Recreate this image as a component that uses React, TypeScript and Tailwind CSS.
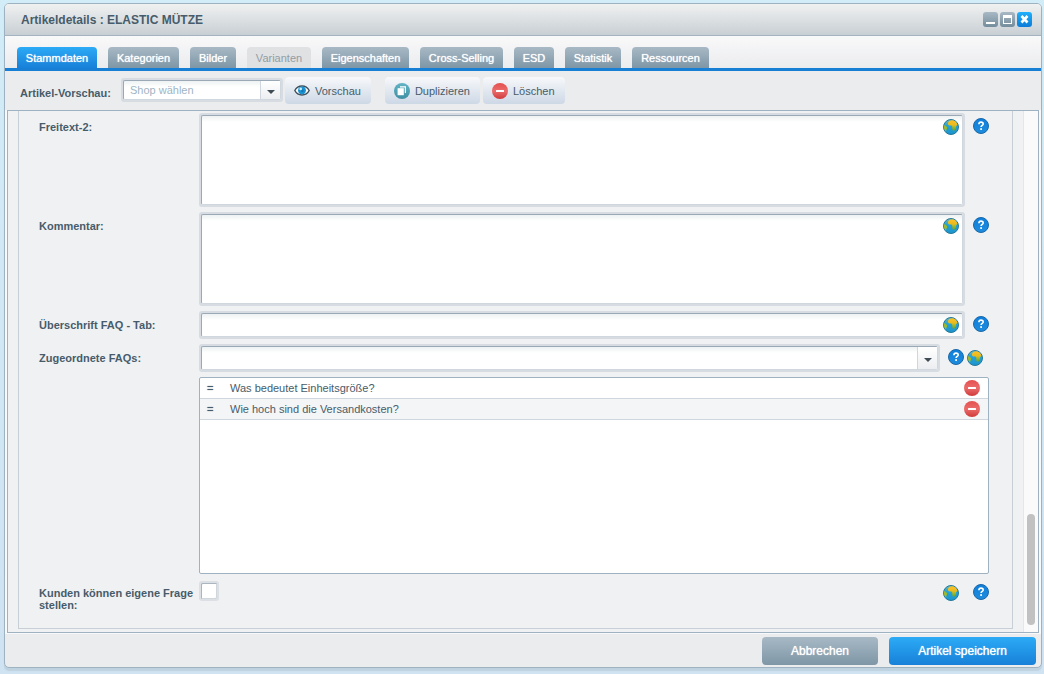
import React, { useState } from "react";

interface Tab {
  id: string;
  label: string;
  width: string;
  disabled?: boolean;
}

const TABS: Tab[] = [
  { id: "main", label: "Stammdaten", width: "w-[80px]" },
  { id: "categories", label: "Kategorien", width: "w-[71px]" },
  { id: "images", label: "Bilder", width: "w-[46px]" },
  { id: "variants", label: "Varianten", width: "w-[64px]", disabled: true },
  { id: "properties", label: "Eigenschaften", width: "w-[87px]" },
  { id: "cross", label: "Cross-Selling", width: "w-[83px]" },
  { id: "esd", label: "ESD", width: "w-[40px]" },
  { id: "stats", label: "Statistik", width: "w-[56px]" },
  { id: "resources", label: "Ressourcen", width: "w-[77px]" },
];

const FAQS = ["Was bedeutet Einheitsgröße?", "Wie hoch sind die Versandkosten?"];

const GlobeIcon = () => (
  <svg width="16" height="16" viewBox="0 0 16 16" className="block">
    <defs>
      <linearGradient id="sea" x1="0" y1="0" x2="0" y2="1">
        <stop offset="0" stopColor="#6dbbb8" />
        <stop offset="0.4" stopColor="#25a3d8" />
        <stop offset="1" stopColor="#1c94cc" />
      </linearGradient>
      <linearGradient id="land" x1="0" y1="0" x2="0" y2="1">
        <stop offset="0.2" stopColor="#f6be22" />
        <stop offset="0.45" stopColor="#e5bb20" />
        <stop offset="0.7" stopColor="#9cb526" />
        <stop offset="1" stopColor="#5fa32c" />
      </linearGradient>
    </defs>
    <circle cx="8" cy="8" r="7.500" fill="url(#sea)" stroke="#23789a" />
    <path
      d="M5.200 3.200 6.500 1.700 9.800 1.300 12.300 2.200 14 4.400 14.200 6 13 7.600 12.800 9.600 11.600 11.600 9.800 11.800 9.400 10.200 9.200 7.600 8.400 6.600 6 6.500 4.900 5.200z"
      fill="url(#land)"
    />
    <path d="M.8 6.400 2 6.200 3.400 7.600 4.300 8.600 3.600 10.400 2.900 12.400 1.500 10.800.8 8.600z" fill="#9db92c" />
  </svg>
);

const HelpIcon = () => (
  <svg width="16" height="16" viewBox="0 0 16 16" className="block">
    <defs>
      <linearGradient id="help" x1="0" y1="0" x2="0" y2="1">
        <stop offset="0" stopColor="#0f7fdc" />
        <stop offset="1" stopColor="#1f8cdc" />
      </linearGradient>
    </defs>
    <circle cx="8" cy="8" r="7.500" fill="url(#help)" stroke="#1a68a8" />
    <path
      d="M5.900 6.200C5.900 4.800 6.800 4.100 8 4.100c1.300 0 2.200.7 2.200 1.800 0 1.500-2.100 1.500-2.100 3.200"
      fill="none"
      stroke="#fff"
      strokeWidth="1.600"
    />
    <rect x="7.200" y="10.200" width="1.800" height="1.700" fill="#fff" />
  </svg>
);

const MinusIcon = () => (
  <svg width="16" height="16" viewBox="0 0 16 16" className="block">
    <defs>
      <linearGradient id="red" x1="0" y1="0" x2="0" y2="1">
        <stop offset="0" stopColor="#e4504f" />
        <stop offset="0.5" stopColor="#ea6c6b" />
        <stop offset="1" stopColor="#d03a3a" />
      </linearGradient>
    </defs>
    <circle cx="8" cy="8" r="8" fill="url(#red)" />
    <rect x="4" y="7" width="8" height="2" rx="0.500" fill="#fff" />
  </svg>
);

const CopyIcon = () => (
  <svg width="16" height="16" viewBox="0 0 16 16" className="block">
    <defs>
      <linearGradient id="teal" x1="0" y1="0" x2="0" y2="1">
        <stop offset="0" stopColor="#62b4c4" />
        <stop offset="1" stopColor="#3e8fa4" />
      </linearGradient>
    </defs>
    <circle cx="8" cy="8" r="8" fill="url(#teal)" />
    <path d="M6 3.200h6v6.800h-1.200V4.400H6z" fill="#fff" />
    <rect x="3.600" y="5.200" width="6.200" height="7" fill="#fff" />
  </svg>
);

const EyeIcon = () => (
  <svg width="16" height="16" viewBox="0 0 16 16" className="block">
    <path
      d="M.8 7.500C2.500 4.300 5 3 8 3s5.500 1.300 7.200 4.500C13.500 10.800 11 12 8 12S2.500 10.800.8 7.500z"
      fill="#fff"
      stroke="#3c4f5a"
      strokeWidth="1.400"
    />
    <circle cx="8" cy="7.300" r="3.900" fill="#1a92d2" />
    <circle cx="8.400" cy="7.800" r="1.400" fill="#1576b4" />
    <circle cx="6.700" cy="5.900" r="1.300" fill="#c8ecfb" />
  </svg>
);

const IconButton = ({ label, className = "", children }: { label: string; className?: string; children: React.ReactNode }) => (
  <button type="button" aria-label={label} className={`block size-4 shrink-0 ${className}`}>
    {children}
  </button>
);

const HelpButton = () => (
  <IconButton label="Hilfe" className="mt-[5px]">
    <HelpIcon />
  </IconButton>
);

const Frame = ({ className = "", children }: { className?: string; children: React.ReactNode }) => (
  <div className={`relative rounded-[3px] border-2 border-[#d7dce2] ${className}`}>{children}</div>
);

const inputClass =
  "block w-full resize-none rounded-[2px] border border-t-[#9aa9b5] border-l-[#9aa9b5] border-r-[#d0d7de] border-b-[#d0d7de] bg-white bg-linear-to-b from-[#eef2f2] to-white to-[6px] px-1.5 outline-none";

interface ComboProps {
  id: string;
  placeholder: string;
  heightClass: string;
}

const Combo: React.FC<ComboProps> = ({ id, placeholder, heightClass }) => (
  <>
    <select id={id} defaultValue="" className={`${inputClass} ${heightClass} appearance-none text-[11px] text-[#9fb4c3]`}>
      <option value="">{placeholder}</option>
    </select>
    <span className="pointer-events-none absolute inset-y-px right-px flex w-5 items-center justify-center border-l border-[#cfd6dd] bg-linear-to-b from-white to-[#eceef1]">
      <svg width="8" height="4" viewBox="0 0 8 4" className="mt-1">
        <path d="M0 0h8L4 4z" fill="#3f4c55" />
      </svg>
    </span>
  </>
);

const Row = ({ id, label, children }: { id: string; label: string; children: React.ReactNode }) => (
  <div className="flex items-start">
    <label htmlFor={id} className="w-40 shrink-0 pt-2 font-bold leading-3">
      {label}
    </label>
    <div className="flex min-w-0 flex-1 items-start gap-2">{children}</div>
  </div>
);

const TextAreaRow = ({ id, label }: { id: string; label: string }) => (
  <Row id={id} label={label}>
    <Frame className="flex-1">
      <textarea id={id} className={`${inputClass} h-[90px]`} />
      <IconButton label="Übersetzen" className="absolute top-1 right-1">
        <GlobeIcon />
      </IconButton>
    </Frame>
    <HelpButton />
  </Row>
);

const ToolbarButton = ({ icon, children }: { icon: React.ReactNode; children: React.ReactNode }) => (
  <button
    type="button"
    className="flex h-[27px] items-center gap-[5px] rounded-[4px] bg-linear-to-b from-[#f7f8fa] to-[#cdd8e6] pr-2.5 pl-[9px]"
  >
    {icon}
    {children}
  </button>
);

export default function App() {
  const [activeTab, setActiveTab] = useState("main");
  const [ownQuestion, setOwnQuestion] = useState(false);

  const tabClass = (tab: Tab) => {
    if (tab.disabled) return "bg-[#e0e1e3] text-[#929da5]";
    if (tab.id === activeTab) return "bg-linear-to-b from-[#2cabf6] to-[#1880d8] text-white text-shadow-[0_0_1px_#ffffff]";
    return "bg-linear-to-b from-[#a8b9c5] to-[#7e96a6] text-white text-shadow-[0_0_1px_#ffffff]";
  };

  return (
    <div className="min-h-screen bg-linear-to-b from-[#d2edf7] to-[#cfe3f2] pt-[3px] pr-[2px] pb-[6px] pl-1 font-['Liberation_Sans',Arial,sans-serif] text-[11px] leading-4 text-[#475c6a]">
      <div className="overflow-hidden rounded-[5px] border border-[#9fb2c1] bg-[#ebecee] shadow-[0_3px_1px_#bfd2e0]">
        <header className="flex h-8 items-center justify-between border-b border-[#a3b4c0] bg-linear-to-b from-[#f0f1f1] to-[#c8cfd4] pr-[9px] pl-4">
          <h1 className="text-xs font-bold">Artikeldetails : ELASTIC MÜTZE</h1>
          <div className="flex gap-0.5">
            <button type="button" aria-label="Minimieren" className="size-[15px] rounded-[3px] bg-linear-to-b from-[#a8b9c5] to-[#748c9c]">
              <svg width="15" height="15" className="block">
                <rect x="3" y="10" width="9" height="2" fill="#fff" />
              </svg>
            </button>
            <button type="button" aria-label="Maximieren" className="size-[15px] rounded-[3px] bg-linear-to-b from-[#a8b9c5] to-[#748c9c]">
              <svg width="15" height="15" className="block">
                <path d="M3 3h9v9H3zM4 6v5h7V6z" fill="#fff" fillRule="evenodd" />
              </svg>
            </button>
            <button type="button" aria-label="Schließen" className="size-[15px] rounded-[3px] bg-linear-to-b from-[#1fb0fb] to-[#0c7cd8]">
              <svg width="15" height="15" className="block">
                <path d="M4.500 4l6 6.500M10.500 4l-6 6.500" stroke="#fff" strokeWidth="2.600" />
              </svg>
            </button>
          </div>
        </header>

        <nav className="flex h-[35px] items-end gap-[11px] border-b-[3px] border-[#1880d4] bg-linear-to-b from-[#f9f9fa] to-[#ebecee] pl-3">
          {TABS.map((tab) => (
            <button
              key={tab.id}
              type="button"
              disabled={tab.disabled}
              onClick={() => setActiveTab(tab.id)}
              className={`h-[21px] rounded-t-[4px] text-center whitespace-nowrap ${tab.width} ${tabClass(tab)}`}
            >
              {tab.label}
            </button>
          ))}
        </nav>

        <div className="mr-[3px] flex h-[39px] items-start pt-1.5 pl-[15px]">
          <label htmlFor="shop" className="mt-2 w-[101px] font-bold">
            Artikel-Vorschau:
          </label>
          <Frame className="mt-px mr-0.5 w-[162px]">
            <Combo id="shop" placeholder="Shop wählen" heightClass="h-5" />
          </Frame>
          <div className="flex gap-[14px]">
            <ToolbarButton icon={<EyeIcon />}>Vorschau</ToolbarButton>
            <div className="flex gap-[3px]">
              <ToolbarButton icon={<CopyIcon />}>Duplizieren</ToolbarButton>
              <ToolbarButton icon={<MinusIcon />}>Löschen</ToolbarButton>
            </div>
          </div>
        </div>

        <div className="border-x-2 border-b border-[#f8f9fb]">
          <main className="flex border border-[#9fb2c1] bg-[#f0f1f3]">
            <div className="mr-2.5 mb-[3px] ml-2.5 flex-1 border border-t-0 border-[#c8cfd6] pt-[2px] pr-[23px] pb-[17px] pl-5">
              <div className="flex flex-col gap-[5px]">
                <TextAreaRow id="freitext2" label="Freitext-2:" />
                <TextAreaRow id="kommentar" label="Kommentar:" />

                <Row id="faqTitle" label="Überschrift FAQ - Tab:">
                  <Frame className="flex-1">
                    <input id="faqTitle" type="text" className={`${inputClass} h-6`} />
                    <IconButton label="Übersetzen" className="absolute top-1 right-1">
                      <GlobeIcon />
                    </IconButton>
                  </Frame>
                  <HelpButton />
                </Row>

                <Row id="faqs" label="Zugeordnete FAQs:">
                  <Frame className="flex-1">
                    <Combo id="faqs" placeholder="" heightClass="h-6" />
                  </Frame>
                  <div className="flex gap-[3px] pr-1.5">
                    <HelpButton />
                    <IconButton label="Übersetzen" className="mt-1.5">
                      <GlobeIcon />
                    </IconButton>
                  </div>
                </Row>

                <div className="ml-40 h-[197px] rounded-[2px] border border-[#9fb2c1] bg-white">
                  <table className="w-full border-separate border-spacing-0">
                    <tbody>
                      {FAQS.map((faq) => (
                        <tr key={faq} className="even:bg-[#f4f5f7]">
                          <td className="h-[21px] w-[30px] border-b border-[#cfd6dd] p-0 pl-[7px] text-shadow-[0_0_1px_#475c6a]">=</td>
                          <td className="border-b border-[#cfd6dd] p-0 pb-px">{faq}</td>
                          <td className="w-6 border-b border-[#cfd6dd] p-0 pr-2">
                            <IconButton label="Entfernen">
                              <MinusIcon />
                            </IconButton>
                          </td>
                        </tr>
                      ))}
                    </tbody>
                  </table>
                </div>

                <Row id="ownQuestion" label="Kunden können eigene Frage stellen:">
                  <div className="flex-1">
                    <input
                      id="ownQuestion"
                      type="checkbox"
                      checked={ownQuestion}
                      onChange={(e) => setOwnQuestion(e.target.checked)}
                      className="mt-0.5 block size-5 appearance-none rounded-[3px] border-2 border-[#dcdfe3] bg-white shadow-[inset_1px_1px_0_#a9b5bf,inset_-1px_-1px_0_#cfd6dc] checked:bg-[#1880d4]"
                    />
                  </div>
                  <div className="flex gap-[14px]">
                    <IconButton label="Übersetzen" className="mt-1.5">
                      <GlobeIcon />
                    </IconButton>
                    <HelpButton />
                  </div>
                </Row>
              </div>
            </div>
            {/* scroll track */}
            <div className="flex w-[15px] flex-col items-center justify-end border-l border-[#e4e6e8] bg-[#fafafa] pb-[7px]">
              <div className="h-[111px] w-2 rounded-full bg-[#c1c1c1]" />
            </div>
          </main>
        </div>

        <footer className="flex h-[33px] items-start justify-end gap-[11px] pt-[3px] pr-[5px]">
          <button
            type="button"
            className="h-7 w-[116px] rounded-[4px] bg-linear-to-b from-[#a8b9c5] to-[#7e96a6] text-xs text-white text-shadow-[0_0_1px_#ffffff]"
          >
            Abbrechen
          </button>
          <button
            type="button"
            className="h-7 w-[147px] rounded-[4px] bg-linear-to-b from-[#2cabf6] to-[#1880d8] text-xs text-white text-shadow-[0_0_1px_#ffffff]"
          >
            Artikel speichern
          </button>
        </footer>
      </div>
    </div>
  );
}
